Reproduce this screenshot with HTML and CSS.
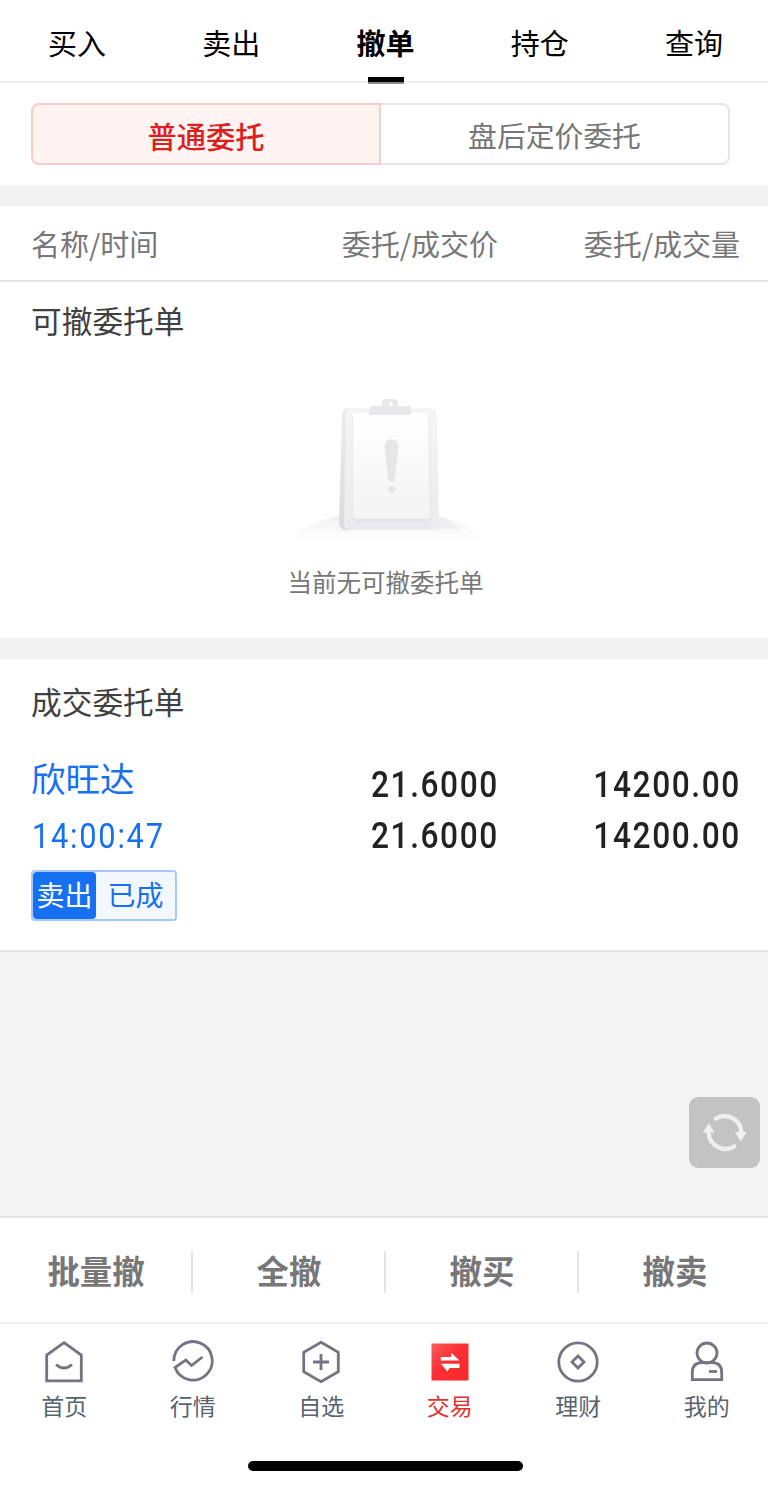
FILE: index.html
```html
<!DOCTYPE html>
<html lang="zh-CN">
<head>
    <meta charset="UTF-8">
    <meta name="viewport" content="width=device-width, initial-scale=1.0">
    <title>撤单</title>
    <link rel="stylesheet" href="styles.css">
</head>
<body>
    <div class="screen">
        <nav class="tabs">
            <a class="tab">买入</a>
            <a class="tab">卖出</a>
            <a class="tab active">撤单</a>
            <a class="tab">持仓</a>
            <a class="tab">查询</a>
        </nav>

        <div class="segment">
            <button class="seg seg-on">普通委托</button>
            <button class="seg">盘后定价委托</button>
        </div>

        <div class="band"></div>

        <div class="list-head">
            <span class="col-name">名称/时间</span>
            <span class="col-price">委托/成交价</span>
            <span class="col-amount">委托/成交量</span>
        </div>

        <section class="pending">
            <h2>可撤委托单</h2>
            <div class="empty">
                <svg class="empty-img" width="210" height="150" viewBox="280 392 210 150">
                    <defs>
                        <linearGradient id="hill" x1="0" y1="0" x2="0" y2="1">
                            <stop offset="0" stop-color="#ededf0"/>
                            <stop offset="1" stop-color="#ffffff"/>
                        </linearGradient>
                        <linearGradient id="side" x1="0" y1="0" x2="0" y2="1">
                            <stop offset="0" stop-color="#ededee"/>
                            <stop offset="1" stop-color="#dadae0"/>
                        </linearGradient>
                        <linearGradient id="board" x1="0" y1="0" x2="0" y2="1">
                            <stop offset="0" stop-color="#f5f5f6"/>
                            <stop offset="1" stop-color="#ebebef"/>
                        </linearGradient>
                        <linearGradient id="paper" x1="0" y1="0" x2="0" y2="1">
                            <stop offset="0" stop-color="#ffffff"/>
                            <stop offset="1" stop-color="#f3f3f4"/>
                        </linearGradient>
                        <filter id="soft" x="-20%" y="-20%" width="140%" height="140%">
                            <feGaussianBlur stdDeviation="1.6"/>
                        </filter>
                    </defs>
                    <path d="M286 540 Q330 509 387 509 Q444 509 489 540 Z" fill="url(#hill)"/>
                    <path d="M436 516 Q450 520 460 529 H436 Z" fill="#e8e8ec" filter="url(#soft)" opacity=".6"/>
                    <path d="M349 408 h72 l11 122 h-86 q-7 0 -7 -8 l3 -106 q0 -8 7 -8z" fill="url(#side)"/>
                    <path d="M353 408 h77 q7 0 7 7 l2 108 q0 7 -7 7 h-81 q-7 0 -7 -7 l2 -108 q0 -7 7 -7z" fill="url(#board)"/>
                    <path d="M353 415 h75 l2 106 h-77z" fill="#d9d9e1" filter="url(#soft)" opacity=".7"/>
                    <path d="M355 413 h71 q2 0 2 2 l2 101 q0 3 -3 3 h-71 q-3 0 -3 -3 v-101 q0 -2 2 -2z" fill="url(#paper)"/>
                    <path d="M370 408 q0 -2 2 -2 h10 v-4 q0 -3 4 -3 h8 q4 0 4 3 v4 h11 q2 0 2 2 v7 h-42z" fill="#e8e8ea"/>
                    <circle cx="391" cy="404" r="2" fill="#fff"/>
                    <path d="M384.5 446 a7 7 0 0 1 14 0 l-3.6 33 a3.5 3.5 0 0 1 -6.8 0z" fill="#e6e6e7"/>
                    <circle cx="391.6" cy="489.5" r="3.8" fill="#e6e6e7"/>
                </svg>
                <p>当前无可撤委托单</p>
            </div>
        </section>

        <div class="band"></div>

        <section class="done">
            <h2>成交委托单</h2>
            <div class="order">
                <div class="order-name">
                    <div class="stock">欣旺达</div>
                    <div class="time">14:00:47</div>
                    <div class="tag"><span class="tag-side">卖出</span><span class="tag-state">已成</span></div>
                </div>
                <div class="order-num order-price">
                    <span>21.6000</span>
                    <span>21.6000</span>
                </div>
                <div class="order-num order-amount">
                    <span>14200.00</span>
                    <span>14200.00</span>
                </div>
            </div>
        </section>

        <div class="blank">
            <button class="refresh">
                <svg width="71" height="71" viewBox="0 0 72 72">
                    <g fill="none" stroke="#efefef" stroke-width="4.4" stroke-linecap="round">
                        <path d="M27 22 A17 17 0 0 1 53 37"/>
                        <path d="M46 50 A17 17 0 0 1 20 35"/>
                    </g>
                    <path d="M46.5 35.5 h12 l-6 9.5z M14 36 h12 l-6 -9.5z" fill="#efefef"/>
                </svg>
            </button>
        </div>

        <div class="actions">
            <button>批量撤</button>
            <button>全撤</button>
            <button>撤买</button>
            <button>撤卖</button>
        </div>

        <nav class="bottom">
            <a class="item">
                <svg class="icon" viewBox="0 0 44 44"><path d="M22 2.6 L39.3 15 V40.8 H4.7 V15 Z"/><path d="M14 24.5 Q22 31.5 30 24.5"/></svg>
                <span>首页</span>
            </a>
            <a class="item">
                <svg class="icon" viewBox="0 0 44 44"><path d="M2.8 21 A19.2 19.2 0 1 1 4 27.5 L14.8 20 L20.6 25.5 L31.5 17"/></svg>
                <span>行情</span>
            </a>
            <a class="item">
                <svg class="icon" viewBox="0 0 44 44"><path d="M22 2.3 L39.3 12.2 V31.8 L22 41.7 L4.7 31.8 V12.2 Z"/><path d="M22 14 V30 M14 22 H30"/></svg>
                <span>自选</span>
            </a>
            <a class="item on">
                <svg class="icon" viewBox="0 0 44 44">
                    <defs>
                        <linearGradient id="red" x1="0" y1="0" x2="1" y2="1">
                            <stop offset="0" stop-color="#ff5a5c"/>
                            <stop offset=".45" stop-color="#fb3034"/>
                            <stop offset="1" stop-color="#f9262a"/>
                        </linearGradient>
                    </defs>
                    <rect x="3.5" y="3.5" width="37" height="37" fill="url(#red)" stroke="none"/>
                    <path d="M12.8 17 H23.2 V12.8 L31.5 20.6 H12.8 Z M31.5 28 H21.6 L19.4 31.6 L13 23.8 H31.5 Z" fill="#fff" stroke="none"/>
                </svg>
                <span>交易</span>
            </a>
            <a class="item">
                <svg class="icon" viewBox="0 0 44 44"><circle cx="22" cy="22" r="19.2"/><path d="M22 16 L28 22 L22 28 L16 22 Z"/></svg>
                <span>理财</span>
            </a>
            <a class="item">
                <svg class="icon" viewBox="0 0 44 44"><circle cx="22" cy="13" r="10"/><path d="M7.3 39.6 V32.5 Q7.3 22.6 17 22.6 H27 Q36.7 22.6 36.7 32.5 V39.6 Z"/><path d="M24 31.5 H32"/></svg>
                <span>我的</span>
            </a>
        </nav>
        <div class="home-bar"></div>
    </div>
</body>
</html>
```
FILE: styles.css
```css
* {
    box-sizing: border-box;
}

html {
    overflow: hidden;
}

body {
    margin: 0;
    background: #fff;
    color: #000;
    font-family: "Noto Sans CJK SC", sans-serif;
    overflow: hidden;
}

button {
    border: none;
    background: none;
    padding: 0;
    font-family: inherit;
}

h2 {
    margin: 0;
    font-size: 30.7px;
    font-weight: 400;
    line-height: 46px;
    color: #404040;
}

.screen {
    width: 771px;
    height: 1487px;
    display: flex;
    flex-direction: column;
}

/* top tabs */
.tabs {
    display: flex;
    height: 83px;
    border-bottom: 2px solid #eee;
}

.tab {
    position: relative;
    flex: 1;
    text-align: center;
    font-size: 29px;
    line-height: 84px;
}

.tab.active {
    font-weight: 700;
}

.tab.active::after {
    content: "";
    position: absolute;
    left: 50%;
    top: 77px;
    width: 36px;
    height: 5px;
    margin-left: -18px;
    background: #000;
    border-bottom: 2px solid #8a8a8a;
}

.segment {
    display: flex;
    margin: 20px 41px 20px 31px;
    height: 62px;
}

.seg {
    flex: 1;
    padding-top: 2px;
    border: 2px solid #e6e6e6;
    border-left: none;
    border-radius: 0 8px 8px 0;
    font-size: 28.8px;
    line-height: 56px;
    color: #777;
}

.seg-on {
    flex: none;
    width: 350px;
    border: 2px solid #f8cccc;
    border-radius: 8px 0 0 8px;
    background: #fff4f2;
    color: #dc2020;
    font-size: 29.3px;
    font-weight: 500;
}

.band {
    height: 21px;
    background: #f2f2f2;
}

.list-head {
    display: flex;
    height: 76px;
    padding: 0 31px;
    border-bottom: 2px solid #e4e4e4;
    font-size: 29px;
    line-height: 74px;
    color: #777;
}

.col-name {
    width: 230px;
}

.col-price {
    width: 237px;
    text-align: right;
}

.col-amount {
    flex: 1;
    text-align: right;
}

.pending {
    height: 356px;
    padding: 15px 31px 0;
}

.empty {
    display: flex;
    flex-direction: column;
    align-items: center;
    padding-top: 49px;
}

.empty-img {
    margin-left: -1px;
}

.empty p {
    margin: 22px 0 0;
    font-size: 24.5px;
    line-height: 36px;
    color: #777;
}

/* filled orders */
.done {
    height: 293px;
    padding: 19px 31px 0;
    border-bottom: 2px solid #e4e4e4;
}

.order {
    display: flex;
    padding-top: 27px;
}

.order-name {
    width: 230px;
    color: #1570f2;
}

.stock {
    font-size: 34.5px;
    line-height: 52px;
}

.time {
    padding: 4px 0 0 1px;
    font-family: Roboto, sans-serif;
    font-size: 35px;
    line-height: 60px;
    letter-spacing: 2px;
    transform: scaleX(0.88);
    transform-origin: left;
}

.tag {
    display: inline-flex;
    height: 51px;
    margin-top: 3px;
    border: 2px solid #a6c9fa;
    border-radius: 4px;
    background: #f3f8ff;
    font-size: 28px;
    line-height: 45px;
}

.tag-side {
    width: 63px;
    border-radius: 4px;
    background: #1570f2;
    color: #fff;
    text-align: center;
}

.tag-state {
    width: 79px;
    text-align: center;
}

/* narrow digits, close to DIN */
.order-num {
    display: flex;
    flex-direction: column;
    padding-top: 9px;
    font-family: Roboto, sans-serif;
    font-size: 36px;
    font-weight: 500;
    line-height: 51px;
    letter-spacing: 1.8px;
    text-align: right;
    color: #222;
    transform: scaleX(0.88);
    transform-origin: right;
}

.order-num span {
    margin-right: -1px;
}

.order-price {
    width: 237px;
}

.order-amount {
    flex: 1;
}

.blank {
    display: flex;
    justify-content: flex-end;
    height: 264px;
    padding: 145px 11px 0 0;
    background: #f4f4f4;
}

.refresh {
    width: 71px;
    height: 71px;
    border-radius: 9px;
    background: #c3c3c3;
}

.refresh svg {
    display: block;
}

/* cancel buttons */
.actions {
    display: flex;
    align-items: center;
    height: 106px;
    padding: 4px 1px 0 0;
    border-top: 2px solid #e4e4e4;
}

.actions button {
    flex: 1;
    height: 42px;
    padding: 0 0 8px 1px;
    border-right: 2px solid #e4e4e4;
    font-size: 32.4px;
    font-weight: 700;
    line-height: 38px;
    color: #777;
}

.actions button:last-child {
    border-right: none;
}

.bottom {
    display: flex;
    height: 139px;
    padding-top: 16px;
    border-top: 2px solid #f0f0f0;
}

.item {
    flex: 1;
    display: flex;
    flex-direction: column;
    align-items: center;
    font-size: 23px;
    line-height: 34px;
    color: #566370;
}

.item span {
    margin-top: 4px;
}

.item.on {
    color: #e23030;
}

.icon {
    width: 44px;
    height: 44px;
    fill: none;
    stroke: #737480;
    stroke-width: 2.8;
}

.home-bar {
    align-self: center;
    width: 275px;
    height: 10px;
    border-radius: 5px;
    background: #000;
}
```
